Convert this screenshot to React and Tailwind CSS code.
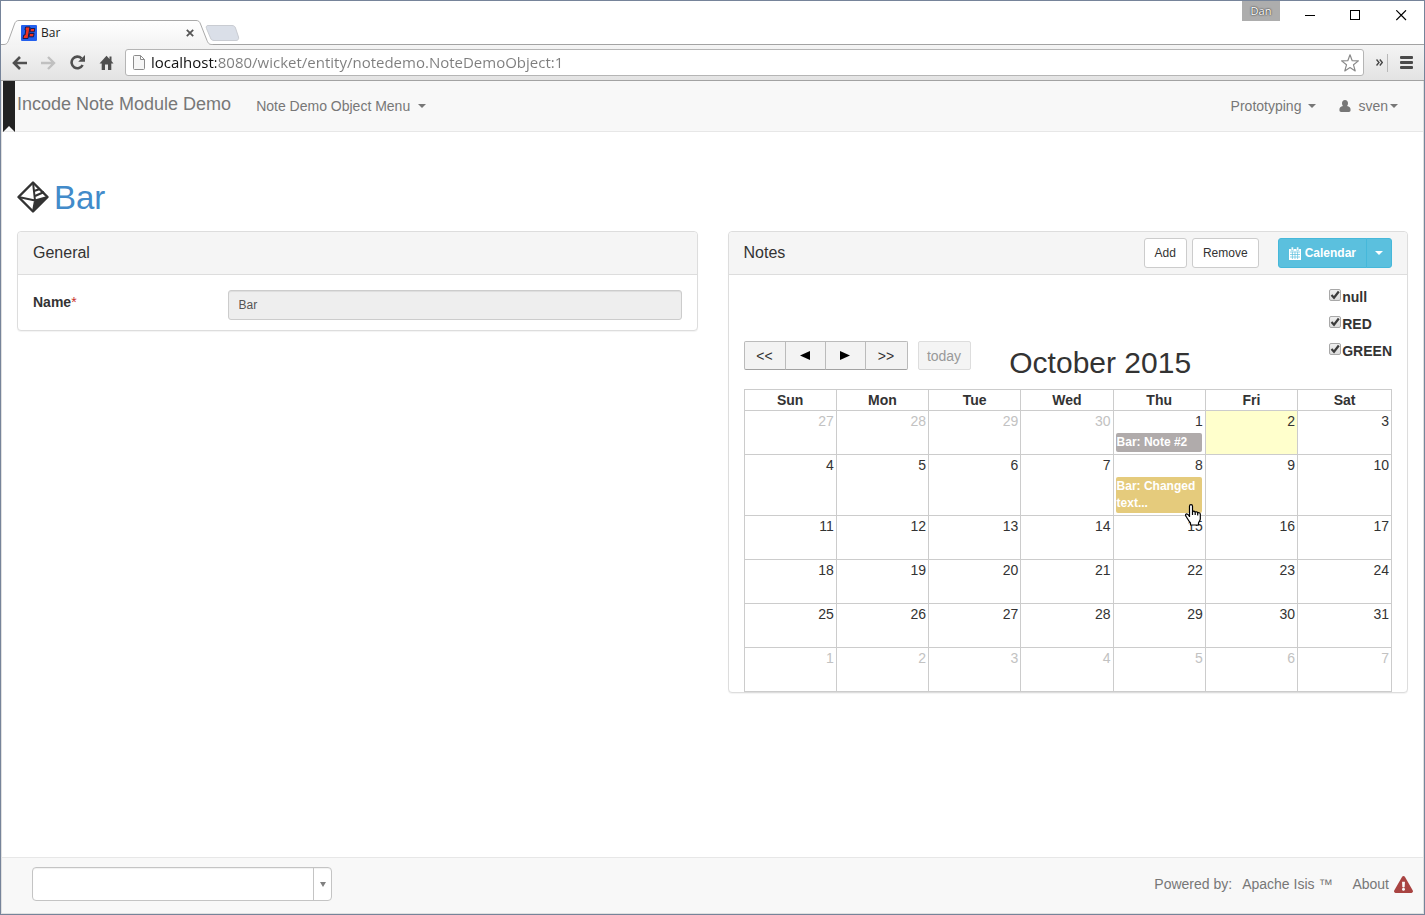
import React from "react";
import { FaExclamationTriangle } from "react-icons/fa";

const WEEKDAYS = ["Sun", "Mon", "Tue", "Wed", "Thu", "Fri", "Sat"];

const WEEKS = [
  [27, 28, 29, 30, 1, 2, 3],
  [4, 5, 6, 7, 8, 9, 10],
  [11, 12, 13, 14, 15, 16, 17],
  [18, 19, 20, 21, 22, 23, 24],
  [25, 26, 27, 28, 29, 30, 31],
  [1, 2, 3, 4, 5, 6, 7],
];

const isOtherMonth = (week, day) => (week === 0 && day > 7) || (week === 5 && day < 8);

function Caret() {
  return (
    <svg width="8" height="4" viewBox="0 0 8 4" fill="currentColor" aria-hidden="true">
      <path d="M0 0h8L4 4z" />
    </svg>
  );
}

function Favicon() {
  return (
    <svg width="16" height="16" viewBox="0 0 16 16" aria-hidden="true">
      <rect width="16" height="16" rx="1" fill="#2360ee" />
      <path d="M4.500 2h4.500L7 13.500H2l.8-3.500H4l.8-5H4z" fill="#f0311f" stroke="#151a50" strokeWidth="1" />
      <path d="M9.500 3.500h4.300l-.6 3.300H8.900zM8.500 8.500h4.600l-.6 3.300H8z" fill="#f0311f" stroke="#151a50" strokeWidth="1" />
    </svg>
  );
}

function TabStrip() {
  return (
    <div className="relative flex h-11 items-start justify-between border-b border-[#a3a3a3] bg-white">
      <svg className="absolute left-0 top-[19px]" width="242" height="25" viewBox="0 0 242 25" aria-hidden="true">
        <defs>
          <linearGradient id="tab" x1="0" y1="0" x2="0" y2="1">
            <stop offset="0" stopColor="#ffffff" />
            <stop offset="1" stopColor="#f3f3f3" />
          </linearGradient>
        </defs>
        <path d="M0 24.500h2c3 0 4-.5 5.500-4L13.500 4c1-2.500 2-3.500 4.500-3.500h177c2.500 0 3.500 1 4.500 3.500l6.500 16.500c1.500 3.500 2.500 4 5.500 4V26H0z" fill="url(#tab)" />
        <path d="M0 24.500h2c3 0 4-.5 5.500-4L13.500 4c1-2.500 2-3.500 4.500-3.500h177c2.500 0 3.500 1 4.500 3.500l6.500 16.500c1.500 3.500 2.500 4 5.500 4" fill="none" stroke="#a9a9a9" />
        <path d="M207 5.500h24c2 0 3 1 3.500 2.500l3 9c.6 2-.5 3.500-2.500 3.500h-22c-2 0-3-1-3.500-2.500l-4-9.500c-.7-2 0-3 1.500-3z" fill="#dadfe8" stroke="#c9ccd2" />
      </svg>
      <div className="relative mt-6 ml-5 flex w-[173px] items-center">
        <Favicon />
        <span className="ml-1 flex-1 font-['Open_Sans',sans-serif] text-[12px] leading-4 text-[#222]">Bar</span>
        <button type="button" aria-label="Close tab" className="flex size-4 items-center justify-end">
          <svg width="8" height="8" viewBox="0 0 8 8" stroke="#555" strokeWidth="1.800" aria-hidden="true">
            <path d="M.8.8l6.400 6.400M7.200.8L.8 7.200" />
          </svg>
        </button>
      </div>
      <div className="flex items-start pr-4">
        <button type="button" className="mr-6 h-5 w-[38px] bg-[#adadad] font-['Open_Sans',sans-serif] text-[11px] leading-5 text-white [text-shadow:0_0_2px_#222,0_0_1px_#444]">
          Dan
        </button>
        <div className="flex gap-[35px] pt-[9px] pr-px">
          <button type="button" aria-label="Minimize">
            <svg width="11" height="11" viewBox="0 0 11 11" stroke="#000" aria-hidden="true"><path d="M1 5.500h10" /></svg>
          </button>
          <button type="button" aria-label="Maximize">
            <svg width="11" height="11" viewBox="0 0 11 11" stroke="#000" fill="none" aria-hidden="true"><rect x=".5" y=".5" width="9" height="9" /></svg>
          </button>
          <button type="button" aria-label="Close">
            <svg width="11" height="11" viewBox="0 0 11 11" stroke="#000" strokeWidth="1.200" aria-hidden="true"><path d="M.3.300l9.700 9.700M10 .3L.3 10" /></svg>
          </button>
        </div>
      </div>
    </div>
  );
}

function AddressBar() {
  return (
    <div className="flex h-9 items-center border-b border-[#a3a3a3] bg-gradient-to-b from-[#f4f4f4] to-[#e3e3e3] pr-[11px] pl-[11px]">
      <div className="flex items-center gap-[14px] text-[#505050]">
        <button type="button" aria-label="Back">
          <svg width="15" height="14" viewBox="0 0 15 14" fill="none" stroke="currentColor" strokeWidth="2.600" aria-hidden="true">
            <path d="M15 7H2.500M8 1L2 7l6 6" />
          </svg>
        </button>
        <button type="button" aria-label="Forward" className="text-[#c0c0c0]">
          <svg width="15" height="14" viewBox="0 0 15 14" fill="none" stroke="currentColor" strokeWidth="2.400" aria-hidden="true">
            <path d="M0 7h12.500M7 1l6 6-6 6" />
          </svg>
        </button>
        <button type="button" aria-label="Reload">
          <svg width="15" height="15" viewBox="0 0 15 15" aria-hidden="true">
            <path d="M12.600 10A5.800 5.800 0 1 1 11.500 3.300" fill="none" stroke="currentColor" strokeWidth="2.600" />
            <path d="M15 0v6.800H8.200z" fill="currentColor" />
          </svg>
        </button>
        <button type="button" aria-label="Home">
          <svg width="15" height="15" viewBox="0 0 15 15" fill="currentColor" aria-hidden="true">
            <path d="M7.500.8L10.500 4V1.500h2V6L14.500 8.500H12.300V15H9V9.500H6V15H2.700V8.500H.5z" />
          </svg>
        </button>
      </div>
      <div className="ml-[11px] flex h-[27px] flex-1 items-center rounded-[3px] border border-[#b5b5b5] bg-white pr-1 pl-[7px]">
        <svg width="12" height="15" viewBox="0 0 12 15" fill="#f6f6f6" stroke="#8c8c8c" aria-hidden="true">
          <path d="M.5 1.500c0-.6.400-1 1-1h6l4 4v9c0 .6-.4 1-1 1h-9c-.6 0-1-.4-1-1zM7.500.5v4h4" />
        </svg>
        <input
          type="text"
          aria-label="Address"
          defaultValue="localhost:8080/wicket/entity/notedemo.NoteDemoObject:1"
          className="ml-[6px] h-6 min-w-0 flex-1 bg-[linear-gradient(to_right,#111_65px,#7d7d7d_65px)] bg-clip-text pb-[2px] font-['Open_Sans',sans-serif] text-[15px] text-transparent caret-black outline-none"
        />
        <button type="button" aria-label="Bookmark this page">
          <svg width="18" height="18" viewBox="0 0 18 18" fill="#fff" stroke="#8a8a8a" strokeLinejoin="round" strokeWidth="1.200" aria-hidden="true">
            <path d="M9 .8l2.200 5.900 6.200.2-4.900 3.900 1.700 6.100L9 13.500l-5.200 3.400 1.700-6.100L.6 6.900l6.200-.2z" />
          </svg>
        </button>
      </div>
      <button type="button" aria-label="More extensions" className="ml-3 text-[#444]">
        <svg width="7" height="7" viewBox="0 0 7 7" fill="none" stroke="currentColor" strokeWidth="1.400" aria-hidden="true">
          <path d="M.5.5l2.500 3-2.500 3M3.800.5l2.500 3-2.500 3" />
        </svg>
      </button>
      <span className="ml-1 h-[18px] w-px bg-[#b8b8b8]" />
      <button type="button" aria-label="Menu" className="ml-3 text-[#4a4a4a]">
        <svg width="13" height="13" viewBox="0 0 13 13" fill="currentColor" aria-hidden="true">
          <rect width="13" height="3" rx="1" />
          <rect y="5" width="13" height="3" rx="1" />
          <rect y="10" width="13" height="3" rx="1" />
        </svg>
      </button>
    </div>
  );
}

function Navbar() {
  return (
    <nav className="relative flex h-[51px] items-center border-b border-[#e7e7e7] bg-[#f8f8f8] pr-[25px] pl-[15px] text-[14px] leading-5 text-[#777]">
      <svg className="absolute top-0 left-px" width="12" height="51" viewBox="0 0 12 51" fill="#222" aria-hidden="true">
        <path d="M0 0h12v51l-6-6-6 6z" />
      </svg>
      <a href="#home" className="pb-1 text-[18px]">Incode Note Module Demo</a>
      <button type="button" className="ml-[25px] flex items-center gap-2">
        Note Demo Object Menu <Caret />
      </button>
      <button type="button" className="ml-auto flex items-center gap-[7px]">
        Prototyping <Caret />
      </button>
      <button type="button" className="ml-[23px] flex items-center">
        <svg width="12" height="12" viewBox="0 0 12 12" fill="currentColor" aria-hidden="true">
          <path d="M6 0c1.900 0 3 1.300 3 3.200 0 1.200-.4 2.200-1 2.900 2.400.3 3.600 1.500 3.600 4 0 1.200-.6 1.900-1.700 1.900H2.100C1 12 .4 11.300.4 10.100c0-2.500 1.200-3.700 3.600-4-.6-.7-1-1.700-1-2.900C3 1.300 4.100 0 6 0z" />
        </svg>
        <span className="ml-[7px]">sven</span>
        <span className="ml-[2px]"><Caret /></span>
      </button>
    </nav>
  );
}

function EntityIcon() {
  return (
    <svg width="32" height="32" viewBox="0 0 32 32" aria-hidden="true">
      <path d="M16 1.500L30.500 16 16 30.500 1.500 16z" fill="#fff" stroke="#333" strokeWidth="2.400" strokeLinejoin="round" />
      <path d="M18 19.500L30.500 16 16 30.500z" fill="#333" />
      <path d="M1.500 16l16.500 3.500L30.500 16M16 1.500l2 18L16 30.500" fill="none" stroke="#333" strokeWidth="2" />
      <path d="M17 10l6-2M18 15l9-4" fill="none" stroke="#333" strokeWidth="2.200" />
    </svg>
  );
}

function Panel({ title, actions, children }) {
  return (
    <section className="min-w-0 rounded border border-[#ddd] bg-white shadow-[0_1px_1px_rgba(0,0,0,0.05)]">
      <header className="flex h-[43px] items-center justify-between rounded-t border-b border-[#ddd] bg-[#f5f5f5] px-[15px]">
        <h2 className="text-[16px] leading-5">{title}</h2>
        {actions}
      </header>
      {children}
    </section>
  );
}

function NoteActions() {
  const plain = "h-[30px] rounded-[3px] border border-[#ccc] bg-white px-[10px]";
  return (
    <div className="flex items-center text-[12px] leading-[18px]">
      <button type="button" className={plain}>Add</button>
      <button type="button" className={plain + " ml-[5px]"}>Remove</button>
      <button type="button" className="ml-[19px] flex h-[30px] items-center rounded-l-[3px] border border-[#46b8da] bg-[#5bc0de] px-[10px] font-bold text-white">
        <svg className="mr-1" width="12" height="13" viewBox="0 0 12 13" aria-hidden="true">
          <path d="M0 2h12v11H0z" fill="currentColor" />
          <path d="M2.300 0h2v3.500h-2zM7.700 0h2v3.500h-2z" fill="currentColor" stroke="#5bc0de" strokeWidth=".5" />
          <path d="M1 5h10M1 7.500h10M1 10h10M3.400 4.700V12M6 4.700V12M8.600 4.700V12" stroke="#5bc0de" strokeWidth=".7" />
        </svg>
        Calendar
      </button>
      <button type="button" aria-label="Choose view" className="-ml-px flex h-[30px] w-[26px] items-center justify-center rounded-r-[3px] border border-[#46b8da] bg-[#5bc0de] text-white">
        <Caret />
      </button>
    </div>
  );
}

function Filter({ label }) {
  return (
    <label className="flex h-5 items-center gap-px text-[14px] leading-5 font-bold">
      <span className="relative flex pb-1">
        <input type="checkbox" defaultChecked className="peer size-3 appearance-none rounded-[2px] border border-[#a8a8a8] bg-gradient-to-b from-[#efefef] to-[#dcdcdc]" />
        <svg className="pointer-events-none absolute top-0 left-0 hidden peer-checked:block" width="12" height="12" viewBox="0 0 12 12" fill="none" stroke="#3c3c3c" strokeWidth="2.200" aria-hidden="true">
          <path d="M2.500 6l2.500 2.700L9.800 2.500" />
        </svg>
      </span>
      {label}
    </label>
  );
}

function CalendarToolbar() {
  const nav = "flex h-[29px] items-center justify-center border border-[#bbb] border-b-[#a2a2a2] bg-[#f3f3f3]";
  return (
    <div className="flex items-end">
      <div className="mb-[19px] flex text-[14px] leading-5">
        <button type="button" aria-label="Previous year" className={nav + " w-[42px] rounded-l-[2px]"}>&lt;&lt;</button>
        <button type="button" aria-label="Previous month" className={nav + " -ml-px w-[41px]"}>
          <svg width="10" height="9" viewBox="0 0 10 9" aria-hidden="true"><path d="M10 0v9L0 4.500z" /></svg>
        </button>
        <button type="button" aria-label="Next month" className={nav + " -ml-px w-[41px]"}>
          <svg width="10" height="9" viewBox="0 0 10 9" aria-hidden="true"><path d="M0 0v9l10-4.500z" /></svg>
        </button>
        <button type="button" aria-label="Next year" className={nav + " -ml-px w-[43px] rounded-r-[2px]"}>&gt;&gt;</button>
        <button type="button" disabled className="ml-[10px] flex h-[29px] w-[53px] items-center justify-center rounded-[2px] border border-[#ddd] bg-[#f4f4f4] text-[#999]">today</button>
      </div>
      <h3 className="mb-2 flex-1 text-center text-[30px] leading-9 whitespace-nowrap">October 2015</h3>
      <div className="flex w-1/4 justify-end pb-7">
        <div className="flex flex-col gap-[7px]">
          <Filter label="null" />
          <Filter label="RED" />
          <Filter label="GREEN" />
        </div>
      </div>
    </div>
  );
}

function HandCursor() {
  return (
    <svg className="absolute top-[27px] right-px" width="16" height="22" viewBox="0 0 16 22" fill="#fff" stroke="#000" strokeWidth="1.200" strokeLinejoin="round" aria-hidden="true">
      <path d="M4.500 13V2.200c0-2 3-2 3 0V8c.3-1.200 2.500-1.200 2.700.4.4-1 2.400-.8 2.500.6.5-.8 2.600-.4 2.600 1.200V15c0 1.500-1.300 2.500-1.800 4v2H5.500v-2c-1.500-1.500-2.500-3.500-4-6-.8-1-1.200-2-.7-2.700.8-1 2.600.2 3.700 2.200" />
      <path d="M7.500 8v3M10.200 8.500V11M12.700 9v2.500" fill="none" />
    </svg>
  );
}

function DayCell({ week, column, day }) {
  const today = week === 0 && column === 5;
  const base = "border border-[#ccc] p-0 align-top";
  return (
    <td className={today ? base + " bg-[#ffffcc]" : base}>
      <div className={isOtherMonth(week, day) ? "pr-[2px] text-right text-[#c2c2c2]" : "pr-[2px] text-right"}>{day}</div>
      {week === 0 && column === 4 && (
        <a href="#note-2" className="mt-[2px] mr-[3px] mb-[2px] ml-[2px] block rounded-[2px] bg-[#b0abab] px-px py-px text-[12px] leading-[17px] font-bold text-white">
          Bar: Note #2
        </a>
      )}
      {week === 1 && column === 4 && (
        <a href="#note-1" className="relative mt-[2px] mr-[3px] mb-[2px] ml-[2px] block rounded-[2px] bg-[#e5cb7c] px-px py-px text-[12px] leading-[17px] font-bold text-white">
          Bar: Changed text...
          <HandCursor />
        </a>
      )}
    </td>
  );
}

function MonthTable() {
  return (
    <table className="w-full table-fixed border-collapse text-[14px] leading-5">
      <thead>
        <tr>
          {WEEKDAYS.map((name, i) => (
            <th key={name} scope="col" className={i < 6 ? "w-[14.25%] border border-[#ccc] p-0 font-bold" : "border border-[#ccc] p-0 font-bold"}>{name}</th>
          ))}
        </tr>
      </thead>
      <tbody>
        {WEEKS.map((days, week) => (
          <tr key={week} className="h-11">
            {days.map((day, column) => (
              <DayCell key={column} week={week} column={column} day={day} />
            ))}
          </tr>
        ))}
      </tbody>
    </table>
  );
}

function Footer() {
  return (
    <footer className="flex h-14 items-center justify-between border-t border-[#e7e7e7] bg-[#f8f8f8] pr-[10px] pb-[3px] pl-[30px] text-[14px] leading-5 text-[#777]">
      <div className="relative h-[34px] w-[300px]">
        <select aria-label="Bookmarked pages" className="size-full appearance-none rounded border border-[#c4c4c4] bg-white px-3 shadow-[inset_0_1px_1px_rgba(0,0,0,0.06)]">
          <option value=""></option>
        </select>
        <span className="pointer-events-none absolute inset-y-0 right-0 flex w-[19px] items-center justify-center border-l border-[#c4c4c4] text-[#808080]">
          <svg width="6" height="5" viewBox="0 0 6 5" fill="currentColor" aria-hidden="true"><path d="M0 0h6L3 5z" /></svg>
        </span>
      </div>
      <div className="flex items-center">
        <span>Powered by:</span>
        <a href="#isis" className="ml-[10px]">Apache Isis ™</a>
        <a href="#about" className="ml-5">About</a>
        <FaExclamationTriangle className="ml-[5px] size-[19px] text-[#a94442]" />
      </div>
    </footer>
  );
}

export default function App() {
  return (
    <div className="flex min-h-screen flex-col border border-[#76849a] bg-white font-['Liberation_Sans',Arial,sans-serif] text-[#333]">
      <TabStrip />
      <AddressBar />
      <div className="flex flex-1 flex-col border-x border-b border-[#e0e0e0]">
        <Navbar />
        <main className="flex-1 px-[15px] pt-12">
          <h1 className="flex h-[34px] items-center gap-[5px] text-[33px] text-[#428bca]">
            <EntityIcon />
            <a href="#bar" className="pt-[2px] leading-[34px]">Bar</a>
          </h1>
          <div className="mt-[17px] grid grid-cols-2 items-start gap-[30px]">
            <Panel title="General">
              <div className="flex px-[15px] pt-[15px] pb-[10px]">
                <label htmlFor="name" className="w-[30%] pt-[2px] text-[14px] leading-5 font-bold">
                  Name<span className="font-normal text-[#c9302c]">*</span>
                </label>
                <input
                  id="name"
                  type="text"
                  readOnly
                  defaultValue="Bar"
                  className="h-[30px] min-w-0 flex-1 rounded-[3px] border border-[#ccc] bg-[#eee] px-[10px] text-[12px] text-[#555] shadow-[inset_0_1px_1px_rgba(0,0,0,0.075)]"
                />
              </div>
            </Panel>
            <Panel title="Notes" actions={<NoteActions />}>
              <div className="px-[15px] pt-3">
                <CalendarToolbar />
                <MonthTable />
              </div>
            </Panel>
          </div>
        </main>
        <Footer />
      </div>
    </div>
  );
}
